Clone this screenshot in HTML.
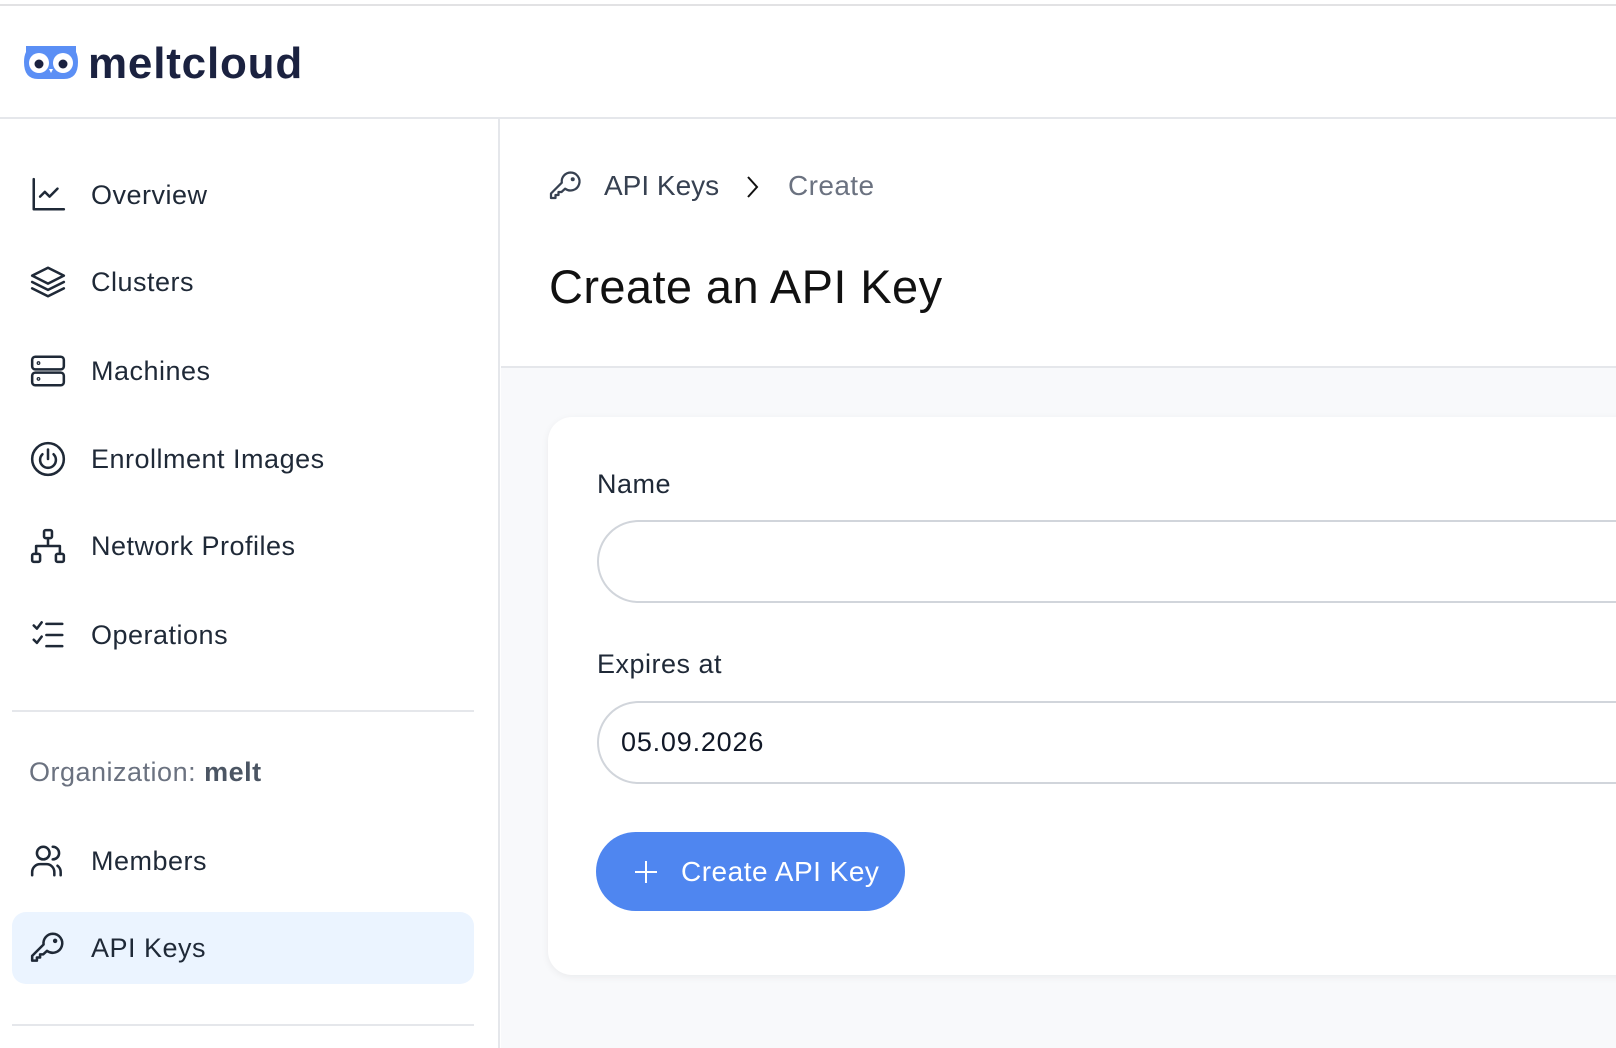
<!DOCTYPE html>
<html><head><meta charset="utf-8"><style>
*{box-sizing:border-box;margin:0;padding:0}
body{width:1616px;height:1048px;overflow:hidden;background:#fff;font-family:"Liberation Sans","DejaVu Sans",sans-serif;color:#1a2233;position:relative}
.abs{position:absolute}
.topline{left:0;top:0;width:1616px;height:6px;border-bottom:2px solid #e2e2e4}
.header{left:0;top:6px;width:1616px;height:113px;border-bottom:2px solid #e5e7eb}
.logo{left:88px;top:39px;font-size:44px;font-weight:bold;color:#1b2240;letter-spacing:0.8px}
.side{left:0;top:119px;width:500px;height:929px;border-right:2px solid #e5e7eb}
.nav{position:absolute;left:29px;font-size:27px;color:#1f2937;display:flex;align-items:center;height:40px;letter-spacing:0.5px}
.nav svg{width:38px;height:38px;fill:none;stroke:#1f2937;stroke-width:1.6;stroke-linecap:round;stroke-linejoin:round}
.nav span{position:absolute;left:62px;white-space:nowrap}
.div{position:absolute;left:12px;width:462px;height:2px;background:#e5e7eb}
.hl{position:absolute;left:12px;top:912px;width:462px;height:72px;border-radius:14px;background:#ebf4ff}
.main{left:501px;top:366px;width:1115px;height:682px;background:#f8f9fb;border-top:2px solid #e5e7eb}
.card{left:548px;top:417px;width:1120px;height:558px;background:#fff;border-radius:24px;box-shadow:0 2px 8px rgba(0,0,0,.06)}
.lbl{position:absolute;font-size:27px;color:#1f2937;letter-spacing:0.5px}
.inp{position:absolute;left:597px;width:1100px;height:83px;border:2px solid #d1d5db;border-radius:42px;font-size:27px;padding-left:22px;display:flex;align-items:center;color:#111827;letter-spacing:0.8px}
.btn{left:596px;top:832px;width:309px;height:79px;background:#4f86f0;border-radius:40px;color:#fff;font-size:28px;display:flex;align-items:center;letter-spacing:0.5px}
</style></head><body>
<div class="abs topline"></div>
<div class="abs header"></div>
<svg class="abs" style="left:24px;top:46px" width="54" height="33" viewBox="0 0 54 33">
<path d="M2 0 H52 V6 Q54 10 54 16 Q54 33 40 33 H14 Q0 33 0 16 Q0 10 2 6 Z" fill="#5b8ff5"/>
<circle cx="15" cy="17" r="10" fill="#fff"/><circle cx="39" cy="17" r="10" fill="#fff"/>
<circle cx="15" cy="18" r="4.5" fill="#1b2240"/><circle cx="39" cy="18" r="4.5" fill="#1b2240"/>
<path d="M25 23 L29 23 L27 27 Z" fill="#fff"/>
</svg>
<div class="abs logo">meltcloud</div>

<div class="abs side"></div>
<div class="nav" style="top:175px"><svg viewBox="0 0 24 24"><path d="M3 2v19h19"/><path d="M7 13l3-3 3 3 5-5"/></svg><span>Overview</span></div>
<div class="nav" style="top:262px"><svg viewBox="0 0 24 24"><path d="M12 3l10 5-10 5-10-5z"/><path d="M2 12l10 5 10-5"/><path d="M2 16l10 5 10-5"/></svg><span>Clusters</span></div>
<div class="nav" style="top:351px"><svg viewBox="0 0 24 24"><rect x="2" y="3" width="20" height="8" rx="2"/><rect x="2" y="13" width="20" height="8" rx="2"/><circle cx="6" cy="7" r=".4"/><circle cx="6" cy="17" r=".4"/></svg><span>Machines</span></div>
<div class="nav" style="top:439px"><svg viewBox="0 0 24 24"><circle cx="12" cy="12" r="10"/><path d="M12 6v6"/><path d="M8.5 9a5 5 0 1 0 7 0"/></svg><span>Enrollment Images</span></div>
<div class="nav" style="top:526px"><svg viewBox="0 0 24 24"><rect x="9.5" y="2" width="5" height="5" rx="1"/><rect x="2" y="17" width="5" height="5" rx="1"/><rect x="17" y="17" width="5" height="5" rx="1"/><path d="M12 7v5M4.5 17v-5h15v5"/></svg><span>Network Profiles</span></div>
<div class="nav" style="top:615px"><svg viewBox="0 0 24 24"><path d="M3 6l2 2 3-4M3 15l2 2 3-4"/><path d="M11 5h10M11 12h10M11 19h10"/></svg><span>Operations</span></div>
<div class="div" style="top:710px"></div>
<div class="abs" style="left:29px;top:757px;font-size:27px;color:#6b7280;letter-spacing:0.5px">Organization: <b style="color:#4b5563">melt</b></div>
<div class="nav" style="top:841px"><svg viewBox="0 0 24 24"><circle cx="9" cy="7" r="4"/><path d="M2 21v-2a5 5 0 0 1 5-5h4a5 5 0 0 1 5 5v2"/><path d="M15 3a4 4 0 0 1 0 8M20 21v-2a5 5 0 0 0-2-4"/></svg><span>Members</span></div>
<div class="hl"></div>
<div class="nav" style="top:928px"><svg viewBox="0 0 24 24"><path d="M15 3a6 6 0 1 1-3.6 10.8L9 16H7v2H5v2H2v-3l7.2-7.2A6 6 0 0 1 15 3z"/><circle cx="16.5" cy="7.5" r=".6" fill="#1f2937"/></svg><span>API Keys</span></div>
<div class="div" style="top:1024px"></div>

<svg class="abs" style="left:548px;top:168px;width:36px;height:36px;fill:none;stroke:#374151;stroke-width:1.5;stroke-linecap:round;stroke-linejoin:round" viewBox="0 0 24 24"><path d="M15 3a6 6 0 1 1-3.6 10.8L9 16H7v2H5v2H2v-3l7.2-7.2A6 6 0 0 1 15 3z"/><circle cx="16.5" cy="7.5" r=".6" fill="#374151"/></svg>
<div class="abs" style="left:604px;top:170px;font-size:28px;color:#374151">API Keys</div>
<svg class="abs" style="left:743px;top:174px" width="18" height="26" viewBox="0 0 18 26"><path d="M5 3l9 10-9 10" fill="none" stroke="#111" stroke-width="2"/></svg>
<div class="abs" style="left:788px;top:170px;font-size:28px;color:#6b7280;letter-spacing:0.4px">Create</div>
<div class="abs" style="left:549px;top:259px;font-size:47px;color:#111;letter-spacing:0.4px">Create an API Key</div>

<div class="abs main"></div>
<div class="abs card"></div>
<div class="lbl" style="left:597px;top:469px">Name</div>
<div class="inp" style="top:520px"></div>
<div class="lbl" style="left:597px;top:649px">Expires at</div>
<div class="inp" style="top:701px">05.09.2026</div>
<div class="abs btn"><svg style="margin-left:37px" width="26" height="26" viewBox="0 0 26 26"><path d="M13 2v22M2 13h22" stroke="#fff" stroke-width="2"/></svg><span style="margin-left:22px">Create API Key</span></div>
</body></html>
